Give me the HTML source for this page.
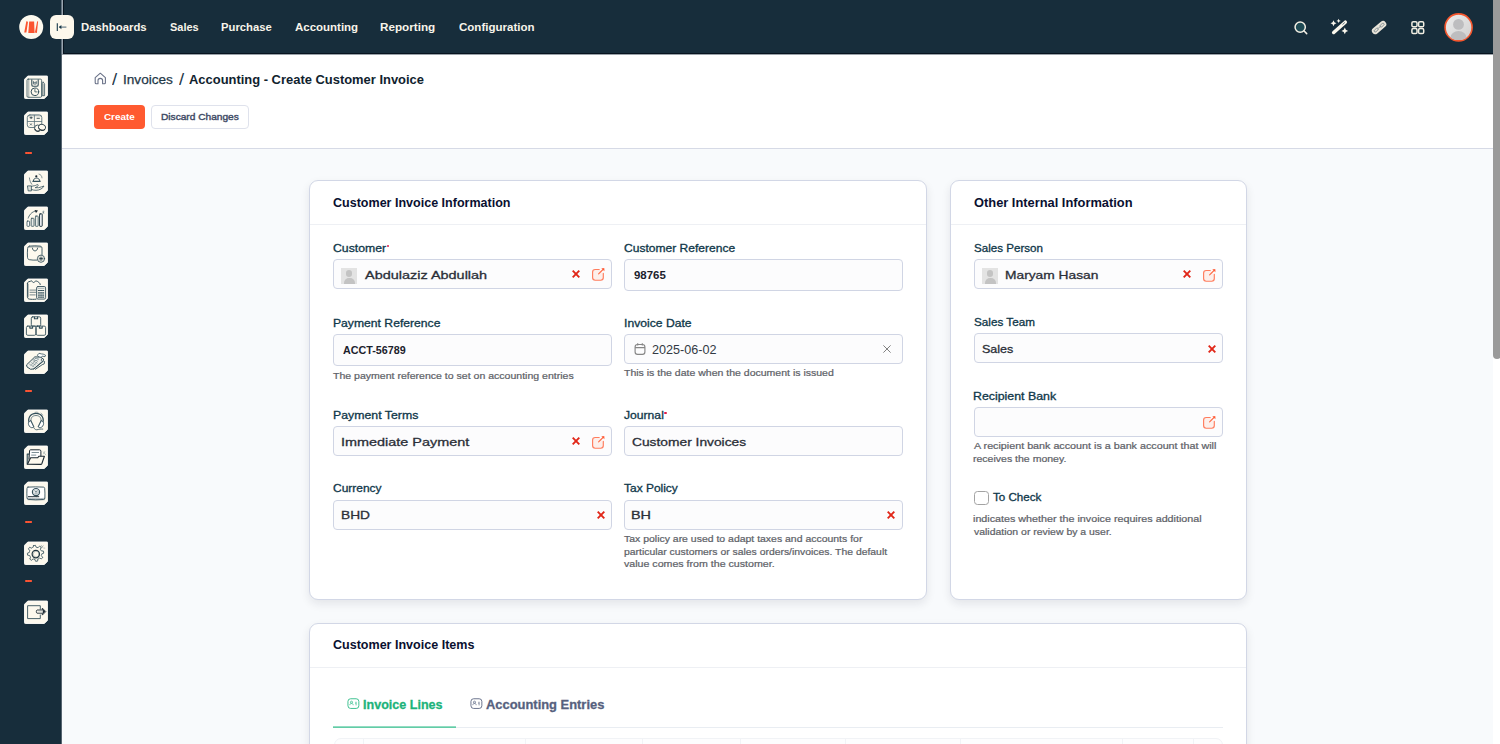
<!DOCTYPE html>
<html lang="en">
<head>
<meta charset="utf-8">
<title>Accounting - Create Customer Invoice</title>
<style>
*{box-sizing:border-box;margin:0;padding:0}
html,body{width:1500px;height:744px;overflow:hidden;background:#f8fafc;font-family:"Liberation Sans",sans-serif;}
body{position:relative}
.abs{position:absolute}
.t{position:absolute;white-space:nowrap;line-height:1;transform-origin:0 0;font-family:"Liberation Sans",sans-serif}
#side{left:0;top:0;width:62px;height:744px;background:#172d3b}
#sideline{left:61px;top:0;width:2px;height:54px;background:linear-gradient(90deg,#5f6f7c 0 1px,#9aa5af 1px 2px)}
#top{left:63px;top:0;width:1437px;height:54px;background:#172d3b;border-left:1px solid #07131f;border-bottom:1px solid #07131f}
#hdr{left:62px;top:54px;width:1438px;height:95px;background:#fff;border-bottom:1px solid #d6dae6}
.card{position:absolute;background:#fff;border:1px solid #d2d7e6;border-radius:9px;box-shadow:0 4px 10px rgba(20,25,40,.09)}
.hline{position:absolute;height:1px;background:#eef0f4}
.inp{position:absolute;border:1px solid #d0d5e4;border-radius:4px;background:#fcfcfd}
.ava{position:absolute;width:16px;height:16px;background:#e3e3e3;overflow:hidden}
.ava:before{content:"";position:absolute;left:4.6px;top:2.2px;width:6.8px;height:6.8px;border-radius:50%;background:#c3c3c3}
.ava:after{content:"";position:absolute;left:2.5px;top:9.5px;width:11px;height:9px;border-radius:5px 5px 0 0;background:#c3c3c3}
.tile{position:absolute;left:24px;width:24px;height:24px}
.dots{position:absolute;left:25px;width:7px;height:2px;background:#e4472c;border-radius:1px}
</style>
</head>

<body>
<div class="abs" id="side"></div>
<div class="abs" id="top"></div>
<div class="abs" id="sideline"></div>
<div class="abs" id="hdr"></div>
<div class="abs" style="left:62px;top:54px;width:1438px;height:1px;background:#9aa2a9"></div>
<div class="abs" style="left:61px;top:54px;width:1px;height:690px;background:#566470"></div>
<!-- scrollbar -->
<div class="abs" style="left:1493px;top:54px;width:7px;height:690px;background:#fff"></div>
<div class="abs" style="left:1493px;top:-6px;width:8px;height:365px;background:#9a9a9a;border-radius:4px"></div>

<!-- logo -->
<svg class="abs" style="left:18px;top:14px" width="27" height="27" viewBox="-1 -1 27 27"><circle cx="12.200" cy="12.100" r="12" fill="#fdfaef"/><g fill="#fb5530"><path d="M5.200 17.600 L7.400 17.600 L9 6.700 L7.300 6.300 Z"/><path d="M9.300 17.900 L10.200 6.400 L15.100 6.400 L15.600 17.900 Z"/><path d="M15.900 17.500 L17.900 17.900 L19.100 6.500 L18.200 6.300 Z"/></g></svg>
<!-- toggle -->
<div class="abs" style="left:50px;top:15px;width:24px;height:24px;border-radius:6px;background:#fdf8ec"></div>
<svg class="abs" style="left:50px;top:15px" width="24" height="24" viewBox="0 0 24 24" fill="none" stroke="#17384a" stroke-width="1.1"><path d="M7.3 8.3v7.6"/><path d="M9.4 12.1h7" stroke="#5b7280"/><path d="M11.4 10 8.8 12.1l2.6 2.1z" fill="#17384a" stroke="none"/></svg>

<!-- top right icons -->
<svg class="abs" style="left:1290px;top:17px" width="22" height="22" viewBox="0 0 22 22" fill="none"><circle cx="10.2" cy="10.050" r="5.150" fill="#1f4a54" stroke="#f3efe4" stroke-width="1.500"/><path d="M14.100 14 16.700 16.600" stroke="#f3efe4" stroke-width="1.500" stroke-linecap="round"/></svg>
<svg class="abs" style="left:1328px;top:16px" width="24" height="24" viewBox="0 0 24 24" fill="#fbf7ec"><path d="M5.700 16.500 L17.300 6.200" stroke="#fbf7ec" stroke-width="3.500" stroke-linecap="round"/><path d="M14.800 8.300 16.600 6.700" stroke="#42586a" stroke-width=".8" stroke-linecap="round"/><path d="M5.500 4.200 l.95 2.050 2.050 .95 -2.050 .95 -.95 2.050 -.95 -2.050 -2.050 -.95 2.050 -.95z"/><path d="M10.600 2.700 l.7 1.500 1.500 .7 -1.500 .7 -.7 1.500 -.7 -1.500 -1.500 -.7 1.500 -.7z"/><path d="M16.800 11.600 l1.050 2.250 2.250 1.050 -2.250 1.050 -1.050 2.250 -1.050 -2.250 -2.250 -1.050 2.250 -1.050z"/></svg>
<svg class="abs" style="left:1367px;top:15px" width="24" height="24" viewBox="0 0 24 24"><g transform="rotate(-40 12.100 12.600)"><rect x="3.700" y="9.300" width="16.800" height="6.600" rx="3.300" fill="#e9e5da"/><rect x="5.900" y="11.500" width="4.800" height="2.200" rx="1.100" fill="none" stroke="#6c7a80" stroke-width=".7"/><rect x="13.500" y="11.500" width="4.800" height="2.200" rx="1.100" fill="none" stroke="#6c7a80" stroke-width=".7"/><path d="M9.500 12.600h5.200" stroke="#8a9599" stroke-width=".8"/></g></svg>
<svg class="abs" style="left:1410px;top:20px" width="16" height="16" viewBox="0 0 16 16" fill="#173540" stroke="#f1ede2" stroke-width="1.5"><rect x="1.9" y="1.7" width="5.1" height="5.1" rx="1.4"/><rect x="8.6" y="1.7" width="5.1" height="5.1" rx="1.4"/><rect x="1.9" y="8.5" width="5.1" height="5.1" rx="1.4"/><rect x="8.6" y="8.5" width="5.1" height="5.1" rx="1.4"/></svg>
<!-- avatar -->
<svg class="abs" style="left:1443px;top:12px" width="31" height="31" viewBox="0 0 31 31"><defs><linearGradient id="ag" x1="0" y1="0" x2="1" y2="1"><stop offset="0" stop-color="#ededed"/><stop offset="1" stop-color="#cfcfcf"/></linearGradient><clipPath id="ac"><circle cx="15.6" cy="15.4" r="12.7"/></clipPath></defs><circle cx="15.6" cy="15.4" r="13.5" fill="url(#ag)" stroke="#f4562d" stroke-width="1.6"/><g clip-path="url(#ac)" fill="#bdbdbf"><circle cx="15.5" cy="12.4" r="5.4"/><ellipse cx="15.5" cy="25.6" rx="8" ry="6.6"/></g></svg>

<!-- breadcrumb home -->
<svg class="abs" style="left:93px;top:71px" width="15" height="15" viewBox="0 0 15 15" fill="none" stroke="#6a7288" stroke-width="1.1" stroke-linejoin="round"><path d="M2.2 6.6 7.3 2.2l5.1 4.4v5.2c0 .6-.4 1-1 1H9.6V9.5c0-1.2-1-2.1-2.3-2.1S5 8.300 5 9.500v3.300H3.200c-.6 0-1-.4-1-1z"/></svg>
<!-- buttons -->
<div class="abs" style="left:94px;top:105px;width:50.500px;height:24.400px;border-radius:4px;background:#ff5a30"></div>
<div class="abs" style="left:151px;top:105px;width:98px;height:24.400px;border-radius:4px;background:#fff;border:1px solid #dfe2ec"></div>

<!-- sidebar icons -->
<svg class="tile" style="top:75px;height:25px" width="24" height="25" viewBox="0 -0.500 24 25"><path d="M3.800 .500H22.900a.8.8 0 0 1 .8.8V19.700L20.300 23H1.300a.8.8 0 0 1-.8-.8V3.800Z" fill="#fdf9ee" stroke="#fffefb" stroke-width=".9" stroke-linejoin="round"/><g fill="none" stroke="#34505b" stroke-width=".8" stroke-linecap="round" stroke-linejoin="round"><rect x="3" y="3.600" width="14.6" height="18.2" rx="1.2"/><path d="M4.800 4v17.600" opacity=".6"/><path d="M7.800 4.200v5.200c0 1 .8 1.300 1.600 1.300h3.200c.9 0 1.600-.4 1.600-1.300V4.200" stroke-width="1.100"/><path d="M9.600 5.800v2.800h2.600V5.800M9.600 7.200h2.600" stroke-width=".7"/><circle cx="10.9" cy="16.3" r="3.800" stroke-width="1"/><path d="M10.900 14v2.400h2.200"/><path d="M19.300 6.600l1.300 2v11.600h-2.400V8.600z" stroke-width=".8"/><path d="M19.400 8.800v11" opacity=".5"/></g></svg>
<svg class="tile" style="top:111px;height:25px" width="24" height="25" viewBox="0 -0.500 24 25"><path d="M3.800 .500H22.900a.8.8 0 0 1 .8.8V19.700L20.300 23H1.300a.8.8 0 0 1-.8-.8V3.800Z" fill="#fdf9ee" stroke="#fffefb" stroke-width=".9" stroke-linejoin="round"/><g fill="none" stroke="#587079" stroke-width=".8" stroke-linecap="round" stroke-linejoin="round"><rect x="3.300" y="3.400" width="14.500" height="12.600" rx="2.600" stroke-width=".9"/><path d="M3.800 4.600c4.600-.5 9.200-.5 13.600 0" opacity=".5"/><path d="M10.400 3.800v12M3.600 10h14"/><path d="M6 6.200h2.200M7.100 5.400v1.800M13 6.800h2.400" stroke="#31464f" stroke-width=".9"/><path d="M6.200 12.200l1.400 1.400M7.600 12.200l-1.400 1.400" stroke="#31464f" stroke-width=".7"/><circle cx="13.700" cy="16.700" r="3.200" fill="#fdf9ee" stroke="#31464f" stroke-width=".9"/><path d="M11 17.800c.6 1.600 2.400 2.400 4.200 1.800" stroke="#1d2a33" stroke-width="1"/><ellipse cx="18" cy="15.900" rx="3.500" ry="3" fill="#fdf9ee" stroke="#31464f" stroke-width=".9" transform="rotate(25 18 15.900)"/><path d="M15.600 17.400c1.200 1.600 3.400 1.800 5 .6" stroke="#1d2a33" stroke-width="1"/></g></svg>
<svg class="tile" style="top:170px;height:25px" width="24" height="25" viewBox="0 -0.500 24 25"><path d="M3.800 .500H22.900a.8.8 0 0 1 .8.8V19.700L20.300 23H1.300a.8.8 0 0 1-.8-.8V3.800Z" fill="#fdf9ee" stroke="#fffefb" stroke-width=".9" stroke-linejoin="round"/><g fill="none" stroke="#34505b" stroke-width=".8" stroke-linecap="round" stroke-linejoin="round"><circle cx="12.300" cy="5.800" r="1.100" fill="#15232d" stroke="none"/><path d="M9.300 10.600c.2-2.200 1.500-3 3.200-3s3.100.9 3.400 3z" stroke-width="1"/><path d="M8.800 10.800h7.400" stroke-width="1.100"/><path d="M15 3.600c1.800.4 3 1.900 3 3.800" opacity=".7"/><path d="M5.400 7.400c.2 2.400 1 4.400 2.400 6.400" opacity=".8"/><path d="M3.800 15.400h3.600v5H4.600z" fill="#dfe2dc"/><path d="M7.600 15.800c2-.6 3.600-.4 5-1.400 1-.7 1.900-.3 1.600.6-.3.800-1.600 1.600-3 2.200h3.400c2-.4 4-1.400 5.400-1.700-1 2.300-4.400 4.300-8 4.300-1.800 0-3.200-.3-4.400-.8"/></g></svg>
<svg class="tile" style="top:206px;height:25px" width="24" height="25" viewBox="0 -0.500 24 25"><path d="M3.800 .500H22.900a.8.8 0 0 1 .8.8V19.700L20.300 23H1.300a.8.8 0 0 1-.8-.8V3.800Z" fill="#fdf9ee" stroke="#fffefb" stroke-width=".9" stroke-linejoin="round"/><g fill="none" stroke="#34505b" stroke-width=".8" stroke-linecap="round" stroke-linejoin="round"><rect x="3" y="14.600" width="2.600" height="5.200" rx=".6" fill="#fff"/><rect x="7.200" y="11.800" width="2.800" height="8" rx=".6" fill="#e9ebe6"/><rect x="11.400" y="9.600" width="2.800" height="10.200" rx=".6" fill="#e9ebe6"/><rect x="15.600" y="7.400" width="2.600" height="12.400" rx=".5" fill="#fff" stroke="#1d333e" stroke-width="1"/><path d="M4.200 11.600c1.200-3.400 3.600-6 7-7" stroke-dasharray="1 .6"/><path d="M10.600 3.600l3.400.4-2 2.400z" fill="#15232d" stroke="none"/><path d="M18.800 4.800l1 2M20.200 5.400l-2 1.200M19.600 4.400l-.4 2.600" stroke-width=".5" opacity=".7"/></g></svg>
<svg class="tile" style="top:242px;height:25px" width="24" height="25" viewBox="0 -0.500 24 25"><path d="M3.800 .500H22.900a.8.8 0 0 1 .8.8V19.700L20.300 23H1.300a.8.8 0 0 1-.8-.8V3.800Z" fill="#fdf9ee" stroke="#fffefb" stroke-width=".9" stroke-linejoin="round"/><g fill="none" stroke="#34505b" stroke-width=".9" stroke-linecap="round" stroke-linejoin="round"><path d="M5.400 3.600c3.600-.4 7.400-.4 10.600 0 1.400.2 2 1 2 2.200v6.400M13 17.600c-2.600.2-5.400 0-7.600-.4-1.400-.3-1.800-1.200-1.900-2.400-.2-2.800-.2-6 .1-8.800.1-1.300.7-2.200 1.800-2.400"/><path d="M4.200 4.600c4.400-.4 9-.4 13 0" opacity=".6"/><path d="M8.400 5.600c.2 1.800 1.200 2.800 2.600 2.800s2.400-1 2.600-2.800" /><circle cx="17" cy="16.200" r="3.600" fill="#fdf9ee"/><circle cx="17" cy="16.200" r="2.100" stroke-width=".5" opacity=".6"/><path d="M17 14.800v2.800M15.600 16.200h2.800" stroke="#1d333e" stroke-width="1"/></g></svg>
<svg class="tile" style="top:278px;height:25px" width="24" height="25" viewBox="0 -0.500 24 25"><path d="M3.800 .500H22.900a.8.8 0 0 1 .8.8V19.700L20.300 23H1.300a.8.8 0 0 1-.8-.8V3.800Z" fill="#fdf9ee" stroke="#fffefb" stroke-width=".9" stroke-linejoin="round"/><g fill="none" stroke="#34505b" stroke-width=".8" stroke-linecap="round" stroke-linejoin="round"><path d="M3.400 5c0-1 .6-1.600 1.600-1.800 1.200-.3 1.600-.6 2.400-.9.800.4 1.200 1.800 2.200 1.700 1-.2 1.400-1.500 2.600-1.500s1.600.8 2.600 1.400c.8.500 1.400 1.200 1.400 2.200M3.400 5v13.400c0 1.200.8 2 2 2.200 2 .3 4 .3 6.600.1" stroke-width="1"/><path d="M4.400 5.600v12.800" opacity=".5"/><path d="M6 11.600h5.600M6 13.800h5.600M6 16.400h5.200" opacity=".85"/><rect x="12.600" y="8" width="9" height="12.600" rx="1.400" fill="#f1f1ea" stroke-width=".9"/><path d="M14.200 9.800h5.800" opacity=".5"/><path d="M14.400 12h5.400M14.400 14.400h5.400M14.400 16.600h5.400M14.400 18.600h5.400" stroke-width="1.100" stroke-dasharray="1.100 1"/></g></svg>
<svg class="tile" style="top:314px;height:25px" width="24" height="25" viewBox="0 -0.500 24 25"><path d="M3.800 .500H22.900a.8.8 0 0 1 .8.8V19.700L20.300 23H1.300a.8.8 0 0 1-.8-.8V3.800Z" fill="#fdf9ee" stroke="#fffefb" stroke-width=".9" stroke-linejoin="round"/><g fill="none" stroke="#34505b" stroke-width=".9" stroke-linecap="round" stroke-linejoin="round"><rect x="7.300" y="2.300" width="9.400" height="9.300" rx="1.400"/><path d="M10.400 2.600v1.600h3.200V2.600" stroke-width="1.100"/><rect x="2.400" y="11.600" width="9.400" height="9.200" rx="1.400"/><path d="M5.800 12v1.600h2.800V12" stroke-width="1.100"/><rect x="12.200" y="11.600" width="9.400" height="9.200" rx="1.400"/><path d="M15.400 12v1.600h2.800V12" stroke-width="1.100"/></g></svg>
<svg class="tile" style="top:350px;height:25px" width="24" height="25" viewBox="0 -0.500 24 25"><path d="M3.800 .500H22.900a.8.8 0 0 1 .8.8V19.700L20.300 23H1.300a.8.8 0 0 1-.8-.8V3.800Z" fill="#fdf9ee" stroke="#fffefb" stroke-width=".9" stroke-linejoin="round"/><g fill="none" stroke="#34505b" stroke-width=".8" stroke-linecap="round" stroke-linejoin="round"><path d="M13.600 4.400l1.400-1.600 2.400.6 1.800.2 2.400 1.200-.6 1.400-2.800-.6-1.800 2.400z" fill="#fff"/><path d="M11.200 6.400l5 .2 3.400 2-.2 1.400-9.400 8.400-3.400.4-3.600-2.400-.4-1.600z" fill="#eceee9" stroke-width="1"/><path d="M5.400 13.600l4.200 2.400M7.200 12l4.200 2.400M9 10.400l4.200 2.400M6.800 15l4.800-5.200M8.800 16l4.800-5.200" stroke-width=".5" opacity=".7"/><path d="M11.400 8l3.200.4-1.600 1.600-3-.4z" fill="#fff" stroke-width=".5"/><path d="M9.600 18.400l10-7.800 1 .4-.4 2.400-2 .8-6.800 4.600" stroke-width=".9"/><circle cx="17.400" cy="9.400" r=".6" fill="#15232d" stroke="none"/></g></svg>
<svg class="tile" style="top:409px;height:25px" width="24" height="25" viewBox="0 -0.500 24 25"><path d="M3.800 .500H22.900a.8.8 0 0 1 .8.8V19.700L20.300 23H1.300a.8.8 0 0 1-.8-.8V3.800Z" fill="#fdf9ee" stroke="#fffefb" stroke-width=".9" stroke-linejoin="round"/><g fill="none" stroke="#34505b" stroke-width=".9" stroke-linecap="round" stroke-linejoin="round"><path d="M5.800 14.400C3 9.400 6 3.800 12 3.800s8.800 5.600 6.200 10.600" stroke-width="1.300"/><path d="M7.400 13C5.800 9.200 8 6 12 6s6.200 3.200 4.600 7" stroke-width=".7"/><path d="M11 2.800c1-.3 2-.3 3 0M17 3.600c.8.600 1.400 1.200 1.800 2" stroke-width=".6" opacity=".7"/><path d="M6.400 11.400c-1.600.6-2.400 2-1.800 3.800.8 2.200 2.400 3.400 4.200 2.800l1-.6-3-6.200z" fill="#fff"/><path d="M17.600 11.400c1.600.6 2.400 2 1.800 3.800-.8 2.200-2.400 3.400-4.200 2.800l-1-.6 3-6.200z" fill="#fff"/><path d="M7.400 12l2.400 5M16.600 12l-2.400 5" stroke-width=".6"/><path d="M9.800 18.200c.6 1.800 2.400 2.600 4.400 1.800.8-.4 2.400-.5 4.600-.4" stroke-width=".8"/></g></svg>
<svg class="tile" style="top:445px;height:25px" width="24" height="25" viewBox="0 -0.500 24 25"><path d="M3.800 .500H22.900a.8.8 0 0 1 .8.8V19.700L20.300 23H1.300a.8.8 0 0 1-.8-.8V3.800Z" fill="#fdf9ee" stroke="#fffefb" stroke-width=".9" stroke-linejoin="round"/><g fill="none" stroke="#34505b" stroke-width=".9" stroke-linecap="round" stroke-linejoin="round"><path d="M3.200 18.600V8.600h1.800" stroke-width="1.100"/><path d="M4 9.200v8.800" opacity=".5"/><path d="M5 13.600l.6-8.600c.1-.5.400-.7.900-.7h9c.9 0 1.400.5 1.400 1.400v6" fill="#fff" stroke="#1d2a33" stroke-width="1"/><path d="M8 7h6.600M7.600 9.600h4.200" stroke-width=".8" opacity=".8"/><path d="M3.400 18.800l3.200-6.600h7.200l1-1.400h5.600l-2.600 7.400c-.2.500-.5.700-1 .7z" fill="#fdf9ee" stroke="#1d2a33" stroke-width="1.100"/><path d="M19.400 6.400l2.400 3M20.800 6l-1.400 2.400" stroke-width=".5" opacity=".6"/></g></svg>
<svg class="tile" style="top:481px;height:25px" width="24" height="25" viewBox="0 -0.500 24 25"><path d="M3.800 .500H22.900a.8.8 0 0 1 .8.8V19.700L20.300 23H1.300a.8.8 0 0 1-.8-.8V3.800Z" fill="#fdf9ee" stroke="#fffefb" stroke-width=".9" stroke-linejoin="round"/><g fill="none" stroke="#34505b" stroke-width=".9" stroke-linecap="round" stroke-linejoin="round"><path d="M4 5.600c4.600-.3 10-.3 15.400 0 .8.100 1.200.5 1.300 1.300.3 3 .3 6.400.2 9.600 0 .9-.5 1.400-1.400 1.500-5.200.4-10.600.4-15.200-.1-.8-.1-1.200-.6-1.300-1.400-.2-3.200-.2-6.400 0-9.600.1-.8.4-1.200 1-1.300z" fill="#fff"/><path d="M3.400 16.800c5.800.5 11.600.5 17.200 0M4 18.200c5.400.3 11 .3 16.400 0" stroke-width=".6" opacity=".7"/><circle cx="12" cy="10.600" r="3.600" stroke-width="1.200"/><circle cx="12" cy="10.600" r="2.200" stroke-width=".5" opacity=".6"/><path d="M11.200 9.600l.8 1 .8-1M12 10.600v1.600" stroke-width=".6"/><path d="M4.400 15.200h10.400" stroke="#1d2a33" stroke-width="1" stroke-dasharray="4 .5 3 .5"/></g></svg>
<svg class="tile" style="top:541px;height:25px" width="24" height="25" viewBox="0 -0.500 24 25"><path d="M3.800 .500H22.900a.8.8 0 0 1 .8.8V19.700L20.300 23H1.300a.8.8 0 0 1-.8-.8V3.800Z" fill="#fdf9ee" stroke="#fffefb" stroke-width=".9" stroke-linejoin="round"/><g fill="none" stroke="#34505b" stroke-width=".8" stroke-linecap="round" stroke-linejoin="round"><path d="M9.400 4.200l2-.4.800 2c.6 0 1.200.2 1.800.4l1.600-1.600 1.600 1.200-.8 2c.4.500.7 1 .9 1.600l2.200.2.200 2-2 .8c0 .6-.2 1.200-.4 1.800l1.400 1.600-1.200 1.600-2-.8c-.5.400-1 .7-1.600.9l-.3 2.100-2 .2-.8-2c-.6 0-1.200-.2-1.700-.4l-1.700 1.400-1.600-1.200.8-2c-.4-.5-.7-1-.9-1.600l-2.100-.3-.2-2 2-.8c0-.6.200-1.200.4-1.700L4.400 7.400l1.200-1.600 2 .8c.5-.4 1-.7 1.600-.9z" stroke-dasharray="2.600 .5"/><circle cx="11.800" cy="12.600" r="3.700" stroke="#1d333e" stroke-width="1.200"/><circle cx="12.200" cy="12.600" r="2.900" stroke-width=".5" opacity=".6"/><path d="M17.200 3.800l1.200 1.800M19.200 4.200l-1.600 2.200M19.800 6.600h1" stroke-width=".5" opacity=".7"/></g></svg>
<svg class="tile" style="top:600px;height:25px" width="24" height="25" viewBox="0 -0.500 24 25"><path d="M3.800 .500H22.900a.8.8 0 0 1 .8.8V19.700L20.300 23H1.300a.8.8 0 0 1-.8-.8V3.800Z" fill="#fdf9ee" stroke="#fffefb" stroke-width=".9" stroke-linejoin="round"/><g fill="none" stroke="#34505b" stroke-width=".9" stroke-linejoin="round"><path d="M16.300 9.200V5.200H3.600v12.900h12.700v-4"/><g transform="translate(0 -1)"><path d="M13 10.500h5.300V8.600l3.500 3.500-3.500 3.500v-1.900h-5.300c-.9 0-.9-3.200 0-3.200z" fill="#f4f3ec" stroke="#1d2a33"/><path d="M18.600 9.400l2.700 2.700-2.700 2.700z" fill="#1d2a33" stroke="none"/><path d="M14.400 12.100h4.200" stroke="#dfe0da" stroke-width="1.300"/></g></g></svg>

<svg class="abs" style="left:24px;top:150.5px" width="10" height="4" viewBox="0 0 10 4"><rect x="1.100" y="1.050" width="6.900" height="1.900" rx=".9" fill="#ee4f2f"/><circle cx="2.300" cy="2" r=".9" fill="#ff5636"/><circle cx="4.600" cy="2" r=".9" fill="#ff5636"/><circle cx="6.900" cy="2" r=".9" fill="#ff5636"/></svg>
<svg class="abs" style="left:24px;top:389.1px" width="10" height="4" viewBox="0 0 10 4"><rect x="1.100" y="1.050" width="6.900" height="1.900" rx=".9" fill="#ee4f2f"/><circle cx="2.300" cy="2" r=".9" fill="#ff5636"/><circle cx="4.600" cy="2" r=".9" fill="#ff5636"/><circle cx="6.900" cy="2" r=".9" fill="#ff5636"/></svg>
<svg class="abs" style="left:24px;top:520.1px" width="10" height="4" viewBox="0 0 10 4"><rect x="1.100" y="1.050" width="6.900" height="1.900" rx=".9" fill="#ee4f2f"/><circle cx="2.300" cy="2" r=".9" fill="#ff5636"/><circle cx="4.600" cy="2" r=".9" fill="#ff5636"/><circle cx="6.900" cy="2" r=".9" fill="#ff5636"/></svg>
<svg class="abs" style="left:24px;top:579.1px" width="10" height="4" viewBox="0 0 10 4"><rect x="1.100" y="1.050" width="6.900" height="1.900" rx=".9" fill="#ee4f2f"/><circle cx="2.300" cy="2" r=".9" fill="#ff5636"/><circle cx="4.600" cy="2" r=".9" fill="#ff5636"/><circle cx="6.900" cy="2" r=".9" fill="#ff5636"/></svg>

<!-- cards -->
<div class="card" style="left:309px;top:180px;width:618px;height:420px"></div>
<div class="card" style="left:950px;top:180px;width:297px;height:420px"></div>
<div class="card" style="left:309px;top:623px;width:938px;height:200px"></div>
<div class="hline" style="left:310px;top:224px;width:616px"></div>
<div class="hline" style="left:951px;top:224px;width:295px"></div>
<div class="hline" style="left:310px;top:667px;width:936px"></div>
<div class="inp" style="left:333px;top:259px;width:279px;height:30px"></div>
<div class="inp" style="left:624px;top:259px;width:279px;height:31.5px"></div>
<div class="inp" style="left:333px;top:334px;width:279px;height:31.5px"></div>
<div class="inp" style="left:624px;top:334px;width:279px;height:30px"></div>
<div class="inp" style="left:333px;top:426px;width:279px;height:30px"></div>
<div class="inp" style="left:624px;top:426px;width:279px;height:30px"></div>
<div class="inp" style="left:333px;top:500px;width:279px;height:30px"></div>
<div class="inp" style="left:624px;top:500px;width:279px;height:30px"></div>
<div class="inp" style="left:974px;top:259px;width:249px;height:30px"></div>
<div class="inp" style="left:974px;top:333px;width:249px;height:30px"></div>
<div class="inp" style="left:974px;top:407px;width:249px;height:30px"></div>
<div class="ava" style="left:341px;top:268px"></div>
<div class="ava" style="left:982px;top:268px"></div>
<svg class="abs" style="left:569.8px;top:268.0px" width="12" height="12" viewBox="0 0 12 12"><path d="M2.700 2.700l6.600 6.600M9.300 2.700l-6.600 6.600" stroke="#e12618" stroke-width="1.900" fill="none"/></svg>
<svg class="abs" style="left:569.8px;top:435.2px" width="12" height="12" viewBox="0 0 12 12"><path d="M2.700 2.700l6.600 6.600M9.300 2.700l-6.600 6.600" stroke="#e12618" stroke-width="1.900" fill="none"/></svg>
<svg class="abs" style="left:594.7px;top:509.4px" width="12" height="12" viewBox="0 0 12 12"><path d="M2.700 2.700l6.600 6.600M9.300 2.700l-6.600 6.600" stroke="#e12618" stroke-width="1.900" fill="none"/></svg>
<svg class="abs" style="left:885.2px;top:509.4px" width="12" height="12" viewBox="0 0 12 12"><path d="M2.700 2.700l6.600 6.600M9.300 2.700l-6.600 6.600" stroke="#e12618" stroke-width="1.900" fill="none"/></svg>
<svg class="abs" style="left:1180.6px;top:268.2px" width="12" height="12" viewBox="0 0 12 12"><path d="M2.700 2.700l6.600 6.600M9.300 2.700l-6.600 6.600" stroke="#e12618" stroke-width="1.900" fill="none"/></svg>
<svg class="abs" style="left:1205.7px;top:342.5px" width="12" height="12" viewBox="0 0 12 12"><path d="M2.700 2.700l6.600 6.600M9.300 2.700l-6.600 6.600" stroke="#e12618" stroke-width="1.900" fill="none"/></svg>
<svg class="abs" style="left:590.9px;top:266.4px" width="16" height="16" viewBox="0 0 16 16" fill="none"><path d="M8.200 3.500H4.200C2.700 3.500 1.600 4.600 1.600 6.100v5.500c0 1.500 1.100 2.600 2.600 2.600h5.500c1.500 0 2.600-1.100 2.600-2.600V7.400" fill="#fdefeb" stroke="#ff7d5e" stroke-width="1.150" stroke-linecap="round"/><path d="M7.600 7.900 12.500 3" stroke="#ff6a45" stroke-width="1.100" stroke-linecap="round"/><path d="M10.300 2.200h3.100v3.100z" fill="#ff5a36"/></svg>
<svg class="abs" style="left:590.9px;top:433.5px" width="16" height="16" viewBox="0 0 16 16" fill="none"><path d="M8.200 3.500H4.200C2.700 3.500 1.600 4.600 1.600 6.100v5.500c0 1.500 1.100 2.600 2.600 2.600h5.500c1.500 0 2.600-1.100 2.600-2.600V7.400" fill="#fdefeb" stroke="#ff7d5e" stroke-width="1.150" stroke-linecap="round"/><path d="M7.600 7.900 12.500 3" stroke="#ff6a45" stroke-width="1.100" stroke-linecap="round"/><path d="M10.300 2.200h3.100v3.100z" fill="#ff5a36"/></svg>
<svg class="abs" style="left:1201.7px;top:266.6px" width="16" height="16" viewBox="0 0 16 16" fill="none"><path d="M8.200 3.500H4.200C2.700 3.500 1.600 4.600 1.600 6.100v5.500c0 1.500 1.100 2.600 2.600 2.600h5.500c1.500 0 2.600-1.100 2.600-2.600V7.400" fill="#fdefeb" stroke="#ff7d5e" stroke-width="1.150" stroke-linecap="round"/><path d="M7.600 7.900 12.500 3" stroke="#ff6a45" stroke-width="1.100" stroke-linecap="round"/><path d="M10.300 2.200h3.100v3.100z" fill="#ff5a36"/></svg>
<svg class="abs" style="left:1201.7px;top:414.3px" width="16" height="16" viewBox="0 0 16 16" fill="none"><path d="M8.200 3.500H4.200C2.700 3.500 1.600 4.600 1.600 6.100v5.500c0 1.500 1.100 2.600 2.600 2.600h5.500c1.500 0 2.600-1.100 2.600-2.600V7.400" fill="#fdefeb" stroke="#ff7d5e" stroke-width="1.150" stroke-linecap="round"/><path d="M7.600 7.900 12.500 3" stroke="#ff6a45" stroke-width="1.100" stroke-linecap="round"/><path d="M10.300 2.200h3.100v3.100z" fill="#ff5a36"/></svg>
<svg class="abs" style="left:633px;top:342px" width="14" height="14" viewBox="0 0 14 14" fill="none" stroke="#868686" stroke-width="1.150"><rect x="2.100" y="2.500" width="9.800" height="9.800" rx="2.400"/><path d="M2.100 5.600h9.800M4.700 1.300v2.200M9.300 1.300v2.200"/></svg>
<svg class="abs" style="left:880.800px;top:343.200px" width="12" height="12" viewBox="0 0 12 12"><path d="M2.400 2.400l7.200 7.200M9.600 2.400l-7.200 7.200" stroke="#808080" stroke-width="1" fill="none"/></svg>
<div class="abs" style="left:387.200px;top:245px;width:2.200px;height:2.200px;border-radius:50%;background:#e11d48"></div>
<div class="abs" style="left:664.400px;top:411.800px;width:2.200px;height:2.200px;border-radius:50%;background:#e11d48"></div>
<div class="abs" style="left:974px;top:490.500px;width:14.500px;height:14px;border:1px solid #a3a3a3;border-radius:3.500px;background:#fff"></div>
<div class="abs" style="left:333px;top:727px;width:890px;height:1px;background:#e9edf2"></div>
<div class="abs" style="left:333px;top:726px;width:123px;height:1px;background:#93dcc2"></div>
<div class="abs" style="left:333px;top:727px;width:123px;height:1px;background:#62cca6"></div>
<svg class="abs" style="left:347.3px;top:697.9px" width="13" height="12" viewBox="0 0 13 12" fill="none" stroke="#2bbb86"><rect x=".95" y=".75" width="10.900" height="9.700" rx="2.700" stroke-width=".9"/><circle cx="4.500" cy="4.200" r="1.050" stroke-width=".7"/><path d="M2.800 7.200c0-1.200.7-1.800 1.700-1.800s1.700.6 1.700 1.800" stroke-width=".7"/><path d="M8 4.300h1.900M8 5.600h1.900M8.400 6.800h1.500" stroke-width=".6"/></svg>
<svg class="abs" style="left:470.1px;top:697.9px" width="13" height="12" viewBox="0 0 13 12" fill="none" stroke="#5c6782"><rect x=".95" y=".75" width="10.900" height="9.700" rx="2.700" stroke-width=".9"/><circle cx="4.500" cy="4.200" r="1.050" stroke-width=".7"/><path d="M2.800 7.200c0-1.200.7-1.800 1.700-1.800s1.700.6 1.700 1.800" stroke-width=".7"/><path d="M8 4.300h1.900M8 5.600h1.900M8.400 6.800h1.500" stroke-width=".6"/></svg>
<div class="abs" style="left:334px;top:738px;width:889px;height:40px;border:1px solid #f1f3f6;border-radius:7px;background:#fdfdfe"></div>
<div class="abs" style="left:363px;top:739px;width:1px;height:10px;background:#f1f3f6"></div>
<div class="abs" style="left:525px;top:739px;width:1px;height:10px;background:#f1f3f6"></div>
<div class="abs" style="left:642px;top:739px;width:1px;height:10px;background:#f1f3f6"></div>
<div class="abs" style="left:740px;top:739px;width:1px;height:10px;background:#f1f3f6"></div>
<div class="abs" style="left:845px;top:739px;width:1px;height:10px;background:#f1f3f6"></div>
<div class="abs" style="left:960px;top:739px;width:1px;height:10px;background:#f1f3f6"></div>
<div class="abs" style="left:1122px;top:739px;width:1px;height:10px;background:#f1f3f6"></div>
<div class="abs" style="left:1193px;top:739px;width:1px;height:10px;background:#f1f3f6"></div>

<!-- text -->
<div class="t" id="n1" style="left:80.99px;top:22.00px;font-size:10.8px;font-weight:bold;color:#f8f4ea;transform:scaleX(1.0521);">Dashboards</div>
<div class="t" id="n2" style="left:169.53px;top:22.00px;font-size:10.8px;font-weight:bold;color:#f8f4ea;transform:scaleX(1.0175);">Sales</div>
<div class="t" id="n3" style="left:220.60px;top:22.00px;font-size:10.8px;font-weight:bold;color:#f8f4ea;transform:scaleX(1.0423);">Purchase</div>
<div class="t" id="n4" style="left:294.82px;top:22.00px;font-size:10.8px;font-weight:bold;color:#f8f4ea;transform:scaleX(1.0626);">Accounting</div>
<div class="t" id="n5" style="left:380.47px;top:22.00px;font-size:10.8px;font-weight:bold;color:#f8f4ea;transform:scaleX(1.0841);">Reporting</div>
<div class="t" id="n6" style="left:458.84px;top:22.00px;font-size:10.8px;font-weight:bold;color:#f8f4ea;transform:scaleX(1.0668);">Configuration</div>
<div class="t" id="b1" style="left:112.20px;top:71.00px;font-size:17.2px;font-weight:normal;color:#1f3848;transform:scaleX(1.0749);">/</div>
<div class="t" id="b2" style="left:122.77px;top:73.00px;font-size:13.2px;font-weight:normal;color:#1f3848;transform:scaleX(1.0311);-webkit-text-stroke:.25px #1f3848;">Invoices</div>
<div class="t" id="b3" style="left:179.00px;top:71.00px;font-size:17.2px;font-weight:normal;color:#1f3848;transform:scaleX(1.0749);">/</div>
<div class="t" id="b4" style="left:189.10px;top:73.00px;font-size:13.2px;font-weight:bold;color:#10222e;transform:scaleX(0.9807);">Accounting - Create Customer Invoice</div>
<div class="t" id="bt1" style="left:103.89px;top:112.00px;font-size:9.4px;font-weight:bold;color:#ffffff;transform:scaleX(1.0511);">Create</div>
<div class="t" id="bt2" style="left:161.12px;top:112.00px;font-size:9.4px;font-weight:normal;color:#3f4b66;transform:scaleX(1.0815);-webkit-text-stroke:.4px #3f4b66;">Discard Changes</div>
<div class="t" id="ct1" style="left:333.11px;top:197.00px;font-size:12px;font-weight:bold;color:#0a1030;transform:scaleX(1.0440);">Customer Invoice Information</div>
<div class="t" id="ct2" style="left:973.60px;top:197.00px;font-size:12px;font-weight:bold;color:#0a1030;transform:scaleX(1.0710);">Other Internal Information</div>
<div class="t" id="ct3" style="left:333.11px;top:639.00px;font-size:12px;font-weight:bold;color:#0a1030;transform:scaleX(1.0445);">Customer Invoice Items</div>
<div class="t" id="l1" style="left:333.20px;top:243.00px;font-size:10.6px;font-weight:normal;color:#10384a;transform:scaleX(1.1576);-webkit-text-stroke:.3px #10384a;">Customer</div>
<div class="t" id="l2" style="left:623.91px;top:243.00px;font-size:10.6px;font-weight:normal;color:#10384a;transform:scaleX(1.1372);-webkit-text-stroke:.3px #10384a;">Customer Reference</div>
<div class="t" id="l3" style="left:332.82px;top:318.00px;font-size:10.6px;font-weight:normal;color:#10384a;transform:scaleX(1.1475);-webkit-text-stroke:.3px #10384a;">Payment Reference</div>
<div class="t" id="l4" style="left:623.52px;top:318.00px;font-size:10.6px;font-weight:normal;color:#10384a;transform:scaleX(1.1473);-webkit-text-stroke:.3px #10384a;">Invoice Date</div>
<div class="t" id="l5" style="left:332.81px;top:410.00px;font-size:10.6px;font-weight:normal;color:#10384a;transform:scaleX(1.1625);-webkit-text-stroke:.3px #10384a;">Payment Terms</div>
<div class="t" id="l6" style="left:624.28px;top:410.00px;font-size:10.6px;font-weight:normal;color:#10384a;transform:scaleX(1.1462);-webkit-text-stroke:.3px #10384a;">Journal</div>
<div class="t" id="l7" style="left:333.21px;top:483.00px;font-size:10.6px;font-weight:normal;color:#10384a;transform:scaleX(1.1307);-webkit-text-stroke:.3px #10384a;">Currency</div>
<div class="t" id="l8" style="left:624.28px;top:483.00px;font-size:10.6px;font-weight:normal;color:#10384a;transform:scaleX(1.1285);-webkit-text-stroke:.3px #10384a;">Tax Policy</div>
<div class="t" id="l9" style="left:973.80px;top:243.00px;font-size:10.6px;font-weight:normal;color:#10384a;transform:scaleX(1.0942);-webkit-text-stroke:.3px #10384a;">Sales Person</div>
<div class="t" id="l10" style="left:973.80px;top:317.00px;font-size:10.6px;font-weight:normal;color:#10384a;transform:scaleX(1.1040);-webkit-text-stroke:.3px #10384a;">Sales Team</div>
<div class="t" id="l11" style="left:973.21px;top:391.00px;font-size:10.6px;font-weight:normal;color:#10384a;transform:scaleX(1.1673);-webkit-text-stroke:.3px #10384a;">Recipient Bank</div>
<div class="t" id="l12" style="left:993.08px;top:492.00px;font-size:10.6px;font-weight:normal;color:#10384a;transform:scaleX(1.0947);-webkit-text-stroke:.3px #10384a;">To Check</div>
<div class="t" id="v1" style="left:365.19px;top:270.00px;font-size:11.5px;font-weight:normal;color:#2b2f38;transform:scaleX(1.2568);-webkit-text-stroke:.3px #2b2f38;">Abdulaziz Abdullah</div>
<div class="t" id="v2" style="left:633.84px;top:270.00px;font-size:10.6px;font-weight:bold;color:#1b212c;transform:scaleX(1.0803);">98765</div>
<div class="t" id="v3" style="left:343.13px;top:345.00px;font-size:10.6px;font-weight:bold;color:#1b212c;transform:scaleX(1.0141);">ACCT-56789</div>
<div class="t" id="v4" style="left:652.21px;top:344.00px;font-size:12.6px;font-weight:normal;color:#333a44;transform:scaleX(1.0008);">2025-06-02</div>
<div class="t" id="v5" style="left:340.66px;top:437.00px;font-size:11.5px;font-weight:normal;color:#2b2f38;transform:scaleX(1.2546);-webkit-text-stroke:.3px #2b2f38;">Immediate Payment</div>
<div class="t" id="v6" style="left:631.73px;top:437.00px;font-size:11.5px;font-weight:normal;color:#2b2f38;transform:scaleX(1.1983);-webkit-text-stroke:.3px #2b2f38;">Customer Invoices</div>
<div class="t" id="v7" style="left:340.71px;top:510.00px;font-size:11.5px;font-weight:normal;color:#2b2f38;transform:scaleX(1.1940);-webkit-text-stroke:.3px #2b2f38;">BHD</div>
<div class="t" id="v8" style="left:631.26px;top:510.00px;font-size:11.5px;font-weight:normal;color:#2b2f38;transform:scaleX(1.2535);-webkit-text-stroke:.3px #2b2f38;">BH</div>
<div class="t" id="v9" style="left:1005.10px;top:270.00px;font-size:11.5px;font-weight:normal;color:#2b2f38;transform:scaleX(1.1978);-webkit-text-stroke:.3px #2b2f38;">Maryam Hasan</div>
<div class="t" id="v10" style="left:982.07px;top:344.00px;font-size:11.5px;font-weight:normal;color:#2b2f38;transform:scaleX(1.0900);-webkit-text-stroke:.3px #2b2f38;">Sales</div>
<div class="t" id="h1" style="left:333.36px;top:371.00px;font-size:9.5px;font-weight:normal;color:#5e6268;transform:scaleX(1.1088);-webkit-text-stroke:.22px #5e6268;">The payment reference to set on accounting entries</div>
<div class="t" id="h2" style="left:624.06px;top:368.00px;font-size:9.5px;font-weight:normal;color:#5e6268;transform:scaleX(1.1067);-webkit-text-stroke:.22px #5e6268;">This is the date when the document is issued</div>
<div class="t" id="h3" style="left:624.06px;top:534.00px;font-size:9.5px;font-weight:normal;color:#5e6268;transform:scaleX(1.1009);-webkit-text-stroke:.22px #5e6268;">Tax policy are used to adapt taxes and accounts for</div>
<div class="t" id="h4" style="left:623.57px;top:547.00px;font-size:9.5px;font-weight:normal;color:#5e6268;transform:scaleX(1.0935);-webkit-text-stroke:.22px #5e6268;">particular customers or sales orders/invoices. The default</div>
<div class="t" id="h5" style="left:624.22px;top:559.00px;font-size:9.5px;font-weight:normal;color:#5e6268;transform:scaleX(1.1187);-webkit-text-stroke:.22px #5e6268;">value comes from the customer.</div>
<div class="t" id="h6" style="left:974.12px;top:441.00px;font-size:9.5px;font-weight:normal;color:#5e6268;transform:scaleX(1.1304);-webkit-text-stroke:.22px #5e6268;">A recipient bank account is a bank account that will</div>
<div class="t" id="h7" style="left:973.46px;top:454.00px;font-size:9.5px;font-weight:normal;color:#5e6268;transform:scaleX(1.1074);-webkit-text-stroke:.22px #5e6268;">receives the money.</div>
<div class="t" id="h8" style="left:973.45px;top:514.00px;font-size:9.5px;font-weight:normal;color:#5e6268;transform:scaleX(1.1304);-webkit-text-stroke:.22px #5e6268;">indicates whether the invoice requires additional</div>
<div class="t" id="h9" style="left:974.12px;top:527.00px;font-size:9.5px;font-weight:normal;color:#5e6268;transform:scaleX(1.1003);-webkit-text-stroke:.22px #5e6268;">validation or review by a user.</div>
<div class="t" id="tb1" style="left:362.76px;top:698.00px;font-size:13.2px;font-weight:bold;color:#1cb37a;transform:scaleX(0.9519);-webkit-text-stroke:.3px #1cb37a;">Invoice Lines</div>
<div class="t" id="tb2" style="left:485.94px;top:698.00px;font-size:13.2px;font-weight:bold;color:#56617e;transform:scaleX(0.9787);-webkit-text-stroke:.3px #56617e;">Accounting Entries</div>
</body>
</html>
